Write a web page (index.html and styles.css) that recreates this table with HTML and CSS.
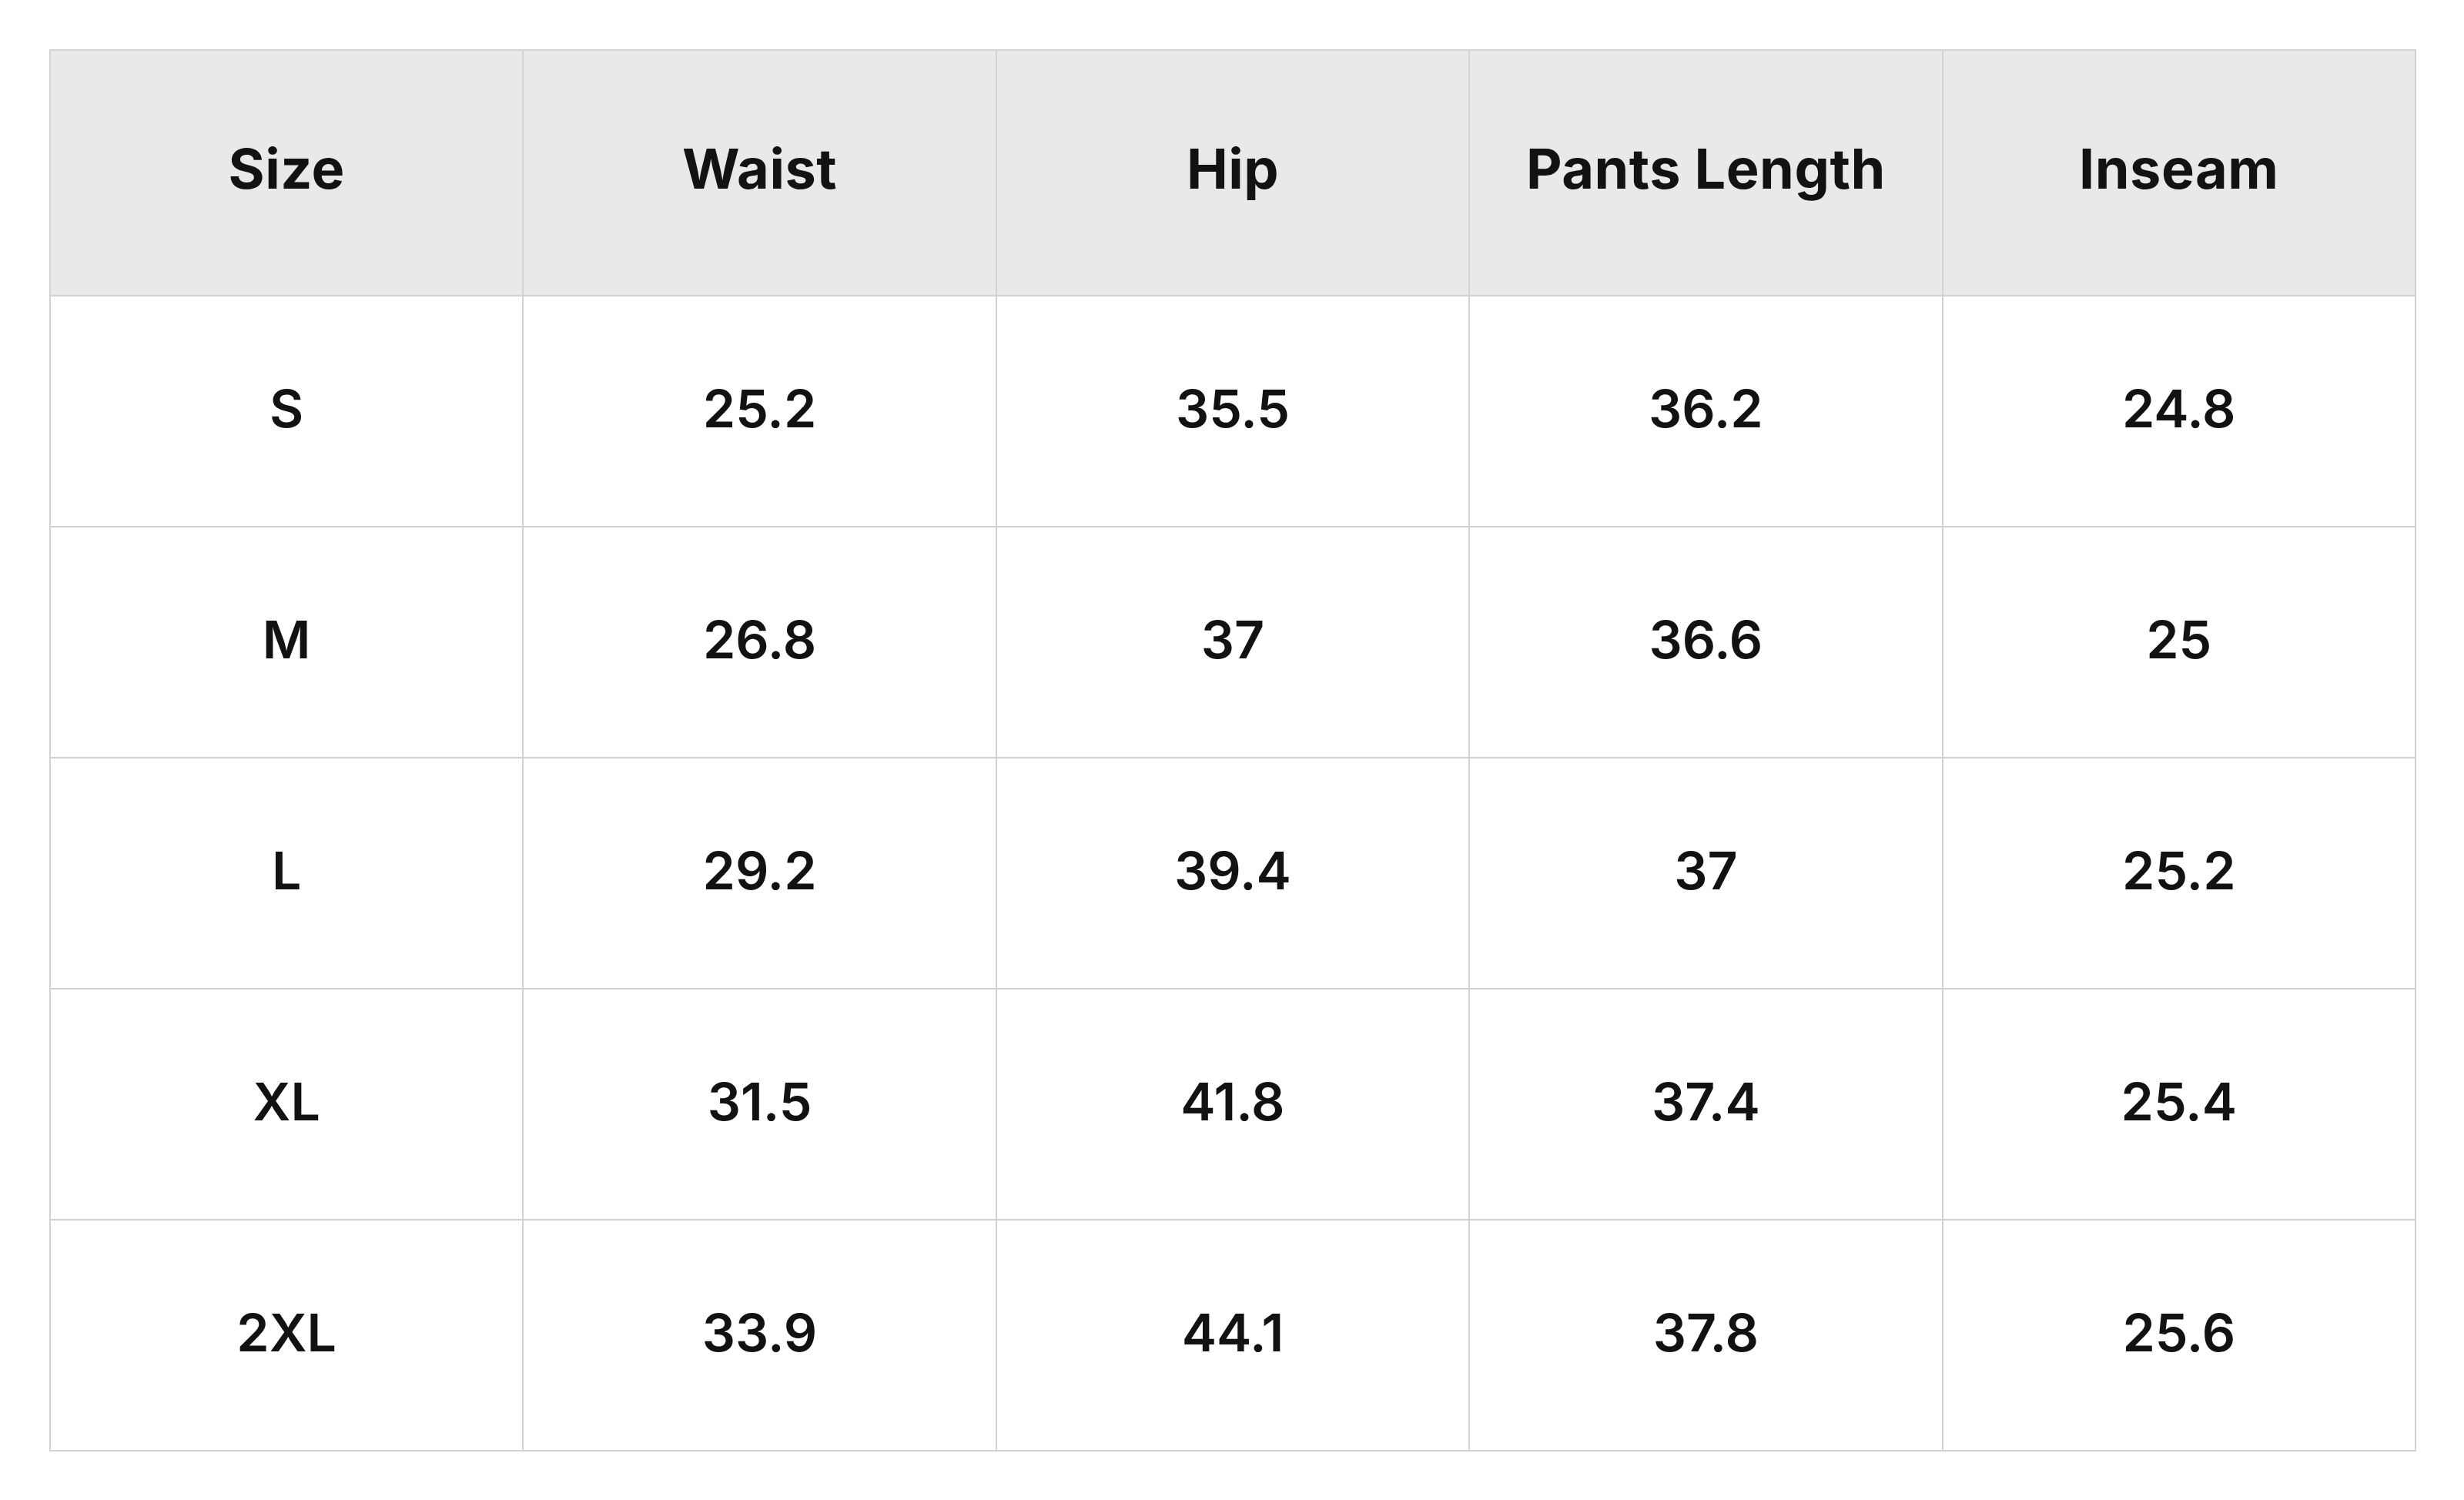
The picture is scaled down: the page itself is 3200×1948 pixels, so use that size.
FILE: index.html
```html
<!DOCTYPE html>
<html>
<head>
<meta charset="utf-8">
<link rel="stylesheet" href="styles.css">
</head>
<body>
<div class="wrap">
<table class="size-table">
<thead>
<tr><th>Size</th><th>Waist</th><th>Hip</th><th>Pants Length</th><th>Inseam</th></tr>
</thead>
<tbody>
<tr><td>S</td><td>25.2</td><td>35.5</td><td>36.2</td><td>24.8</td></tr>
<tr><td>M</td><td>26.8</td><td>37</td><td>36.6</td><td>25</td></tr>
<tr><td>L</td><td>29.2</td><td>39.4</td><td>37</td><td>25.2</td></tr>
<tr><td>XL</td><td>31.5</td><td>41.8</td><td>37.4</td><td>25.4</td></tr>
<tr><td>2XL</td><td>33.9</td><td>44.1</td><td>37.8</td><td>25.6</td></tr>
</tbody>
</table>
</div>
</body>
</html>
```

FILE: styles.css
```css
html, body {
  margin: 0;
  padding: 0;
  background: #ffffff;
}
.wrap {
  padding: 64px 62px 62px 64px;
}
.size-table {
  width: 100%;
  border-collapse: collapse;
  table-layout: fixed;
  font-family: Inter, "Liberation Sans", sans-serif;
  color: #121212;
}
.size-table th,
.size-table td {
  border: 2px solid #d2d2d2;
  text-align: center;
  vertical-align: middle;
  padding: 0;
}
.size-table th {
  background: #e9e9e9;
  height: 305px;
  padding-bottom: 12px;
  font-size: 72px;
  font-weight: 700;
  letter-spacing: 0.5px;
}
.size-table td {
  height: 290px;
  padding-bottom: 8px;
  font-size: 68px;
  font-weight: 600;
}
```
